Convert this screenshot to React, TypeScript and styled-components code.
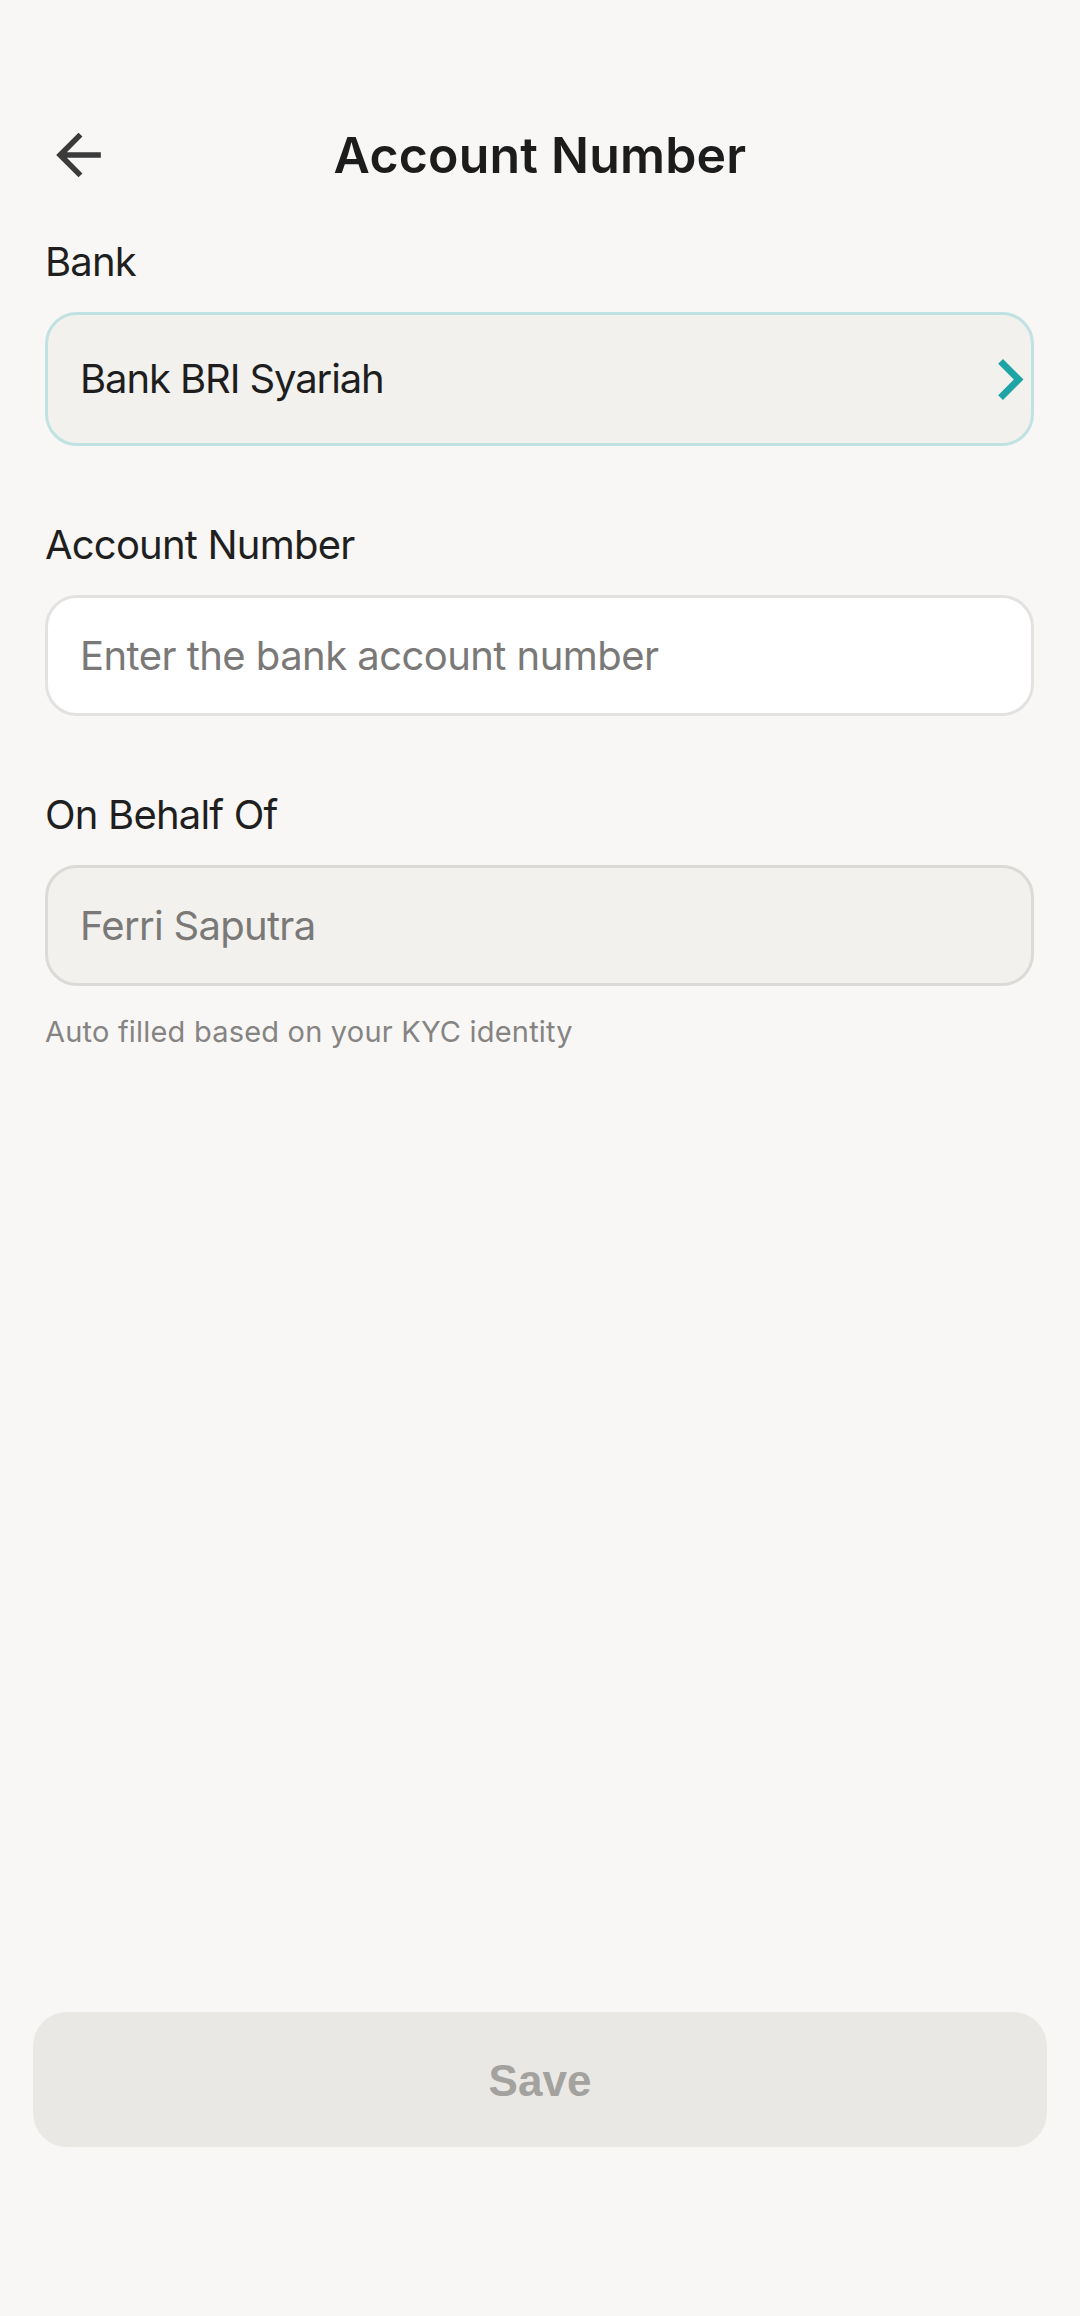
import React from 'react';
import styled, { createGlobalStyle } from 'styled-components';

const GlobalStyle = createGlobalStyle`
  html, body {
    margin: 0;
    padding: 0;
    background: #f8f7f5;
  }
  body {
    font-family: Inter, 'Noto Sans', sans-serif;
    color: #1e1e1e;
  }
  * {
    box-sizing: border-box;
  }
`;

const BackIcon = () => (
  <svg width='67' height='67' viewBox='0 0 24 24' aria-hidden='true'>
    <path
      fill='#3b3b3b'
      d='M20 11H7.83l5.59-5.59L12 4l-8 8 8 8 1.41-1.41L7.83 13H20v-2z'
    />
  </svg>
);

const ChevronIcon = () => (
  <svg width='29' height='41' viewBox='8 6 8.4 12' aria-hidden='true'>
    <path fill='#1ea4a5' d='M10 6L8.59 7.41 13.17 12l-4.58 4.59L10 18l6-6z' />
  </svg>
);

const App: React.FC = () => (
  <>
    <GlobalStyle />
    <Screen>
      <Header>
        <BackButton aria-label='Back'>
          <BackIcon />
        </BackButton>
        <Title>Account Number</Title>
      </Header>

      <Form>
        <Field>
          <Label>Bank</Label>
          <SelectBox>
            <Value>Bank BRI Syariah</Value>
            <ChevronIcon />
          </SelectBox>
        </Field>

        <Field>
          <Label>Account Number</Label>
          <InputBox>
            <Placeholder>Enter the bank account number</Placeholder>
          </InputBox>
        </Field>

        <Field>
          <Label>On Behalf Of</Label>
          <InputBox $disabled>
            <Placeholder $tight>Ferri Saputra</Placeholder>
          </InputBox>
          <Helper>Auto filled based on your KYC identity</Helper>
        </Field>
      </Form>

      <Footer>
        <SaveButton disabled>Save</SaveButton>
      </Footer>
    </Screen>
  </>
);

export default App;

const Screen = styled.div`
  min-height: 2316px;
  display: flex;
  flex-direction: column;
  background: #f8f7f5;
`;

const Header = styled.header`
  position: relative;
  height: 90px;
  margin-top: 110px;
  padding: 0 45px;
  display: flex;
  align-items: center;
  justify-content: center;
`;

const BackButton = styled.button`
  position: absolute;
  left: 45px;
  top: 50%;
  transform: translateY(-50%);
  padding: 0;
  border: none;
  background: none;
  display: flex;
`;

const Title = styled.h1`
  margin: 0;
  font-size: 50px;
  line-height: 60px;
  font-weight: 600;
  color: #1c1c1c;
  letter-spacing: 0.2px;
`;

const Form = styled.main`
  display: flex;
  flex-direction: column;
  gap: 75px;
  padding: 38px 46px 0 45px;
`;

const Field = styled.section`
  display: flex;
  flex-direction: column;
`;

const Label = styled.label`
  font-size: 40px;
  line-height: 48px;
  font-weight: 400;
  letter-spacing: -0.8px;
  color: #1f1f1f;
  margin-bottom: 26px;
`;

const SelectBox = styled.div`
  height: 134px;
  display: flex;
  align-items: center;
  justify-content: space-between;
  padding: 0 6px 0 32px;
  background: #f2f1ee;
  border: 3px solid #c1e2e2;
  border-radius: 32px;
`;

const Value = styled.span`
  font-size: 40px;
  line-height: 48px;
  letter-spacing: -1.1px;
  color: #1e1e1e;
`;

const InputBox = styled.div<{ $disabled?: boolean }>`
  height: 121px;
  display: flex;
  align-items: center;
  padding: 0 32px;
  background: ${(p) => (p.$disabled ? '#f2f1ee' : '#ffffff')};
  border: 3px solid ${(p) => (p.$disabled ? '#dcdad7' : '#e3e2e0')};
  border-radius: 32px;
`;

const Placeholder = styled.span<{ $tight?: boolean }>`
  font-size: 40px;
  line-height: 48px;
  letter-spacing: ${(p) => (p.$tight ? '-0.7px' : '-0.55px')};
  color: #7a7977;
`;

const Helper = styled.p`
  margin: 28px 0 0;
  font-size: 29px;
  line-height: 36px;
  letter-spacing: 0.2px;
  color: #858483;
`;

const Footer = styled.footer`
  margin-top: auto;
  padding: 0 33px 169px;
`;

const SaveButton = styled.button`
  width: 100%;
  height: 135px;
  border: none;
  border-radius: 34px;
  background: #eae8e4;
  color: #a3a29f;
  font-family: 'Liberation Sans', Arial, sans-serif;
  font-weight: 700;
  font-size: 44px;
  padding-top: 4px;
`;
